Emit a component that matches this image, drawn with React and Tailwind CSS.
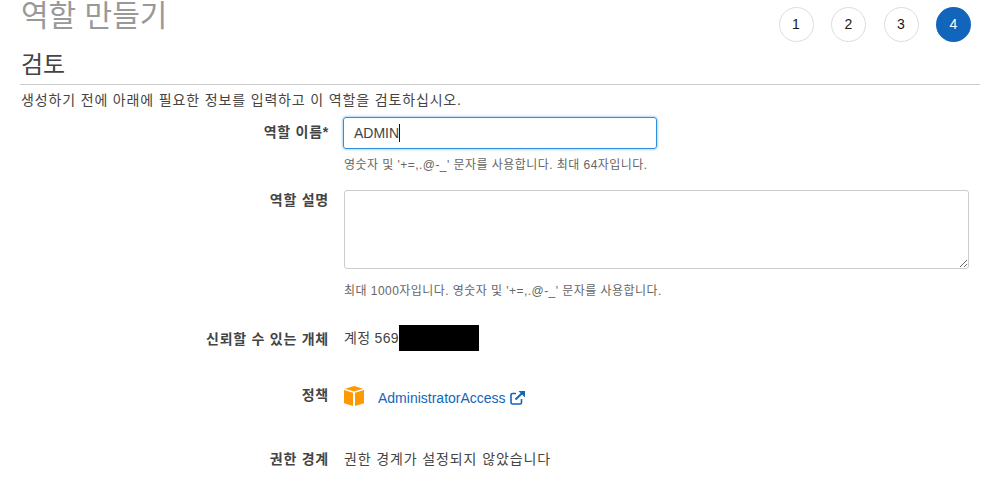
const fontStack = { fontFamily: '"Liberation Sans", "Noto Sans CJK KR", sans-serif' };

function Step({ n, active }) {
  return (
    <div
      className={
        active
          ? 'w-[35px] h-[35px] rounded-full bg-[#1166bb] text-white flex items-center justify-center text-[14px]'
          : 'w-[35px] h-[35px] rounded-full bg-white border border-[#dddddd] text-[#16191f] flex items-center justify-center text-[14px]'
      }
    >
      {n}
    </div>
  );
}

function Row({ label, className, labelClass, children }) {
  return (
    <div className={`flex ${className || ''}`}>
      <div className={`w-[329px] shrink-0 pl-[20px] text-right font-bold text-[14px] leading-[20px] tracking-[0.75px] text-[#444444] ${labelClass || ''}`}>
        {label}
      </div>
      <div className="flex-1 min-w-0 pl-[15px]">{children}</div>
    </div>
  );
}

function Cube() {
  return (
    <svg width="20" height="20" viewBox="0 0 20 20" className="shrink-0">
      <path d="M10 0 L19 2.8 L10 5.6 L1 2.8 Z" fill="#ff9900" />
      <path d="M0 4 L9 6.8 L9 20 L0 17.2 Z" fill="#ff9900" />
      <path d="M20 4 L11 6.8 L11 20 L20 17.2 Z" fill="#ff9900" />
    </svg>
  );
}

function ExternalIcon() {
  return (
    <svg width="15" height="14" viewBox="0 0 15 14" fill="none" stroke="#1166bb" strokeWidth="1.6">
      <path d="M11.5 8 V11.5 a1.5 1.5 0 0 1 -1.5 1.5 H2.5 a1.5 1.5 0 0 1 -1.5 -1.5 V4 a1.5 1.5 0 0 1 1.5 -1.5 H6" />
      <path d="M5.5 8.5 L12.5 1.8" strokeWidth="2" />
      <path d="M8.5 0 H15 V6.5 Z" fill="#1166bb" stroke="none" />
    </svg>
  );
}

export default function App() {
  return (
    <div style={fontStack} className="w-[983px] h-[478px] overflow-hidden bg-white text-[#444444]">
      <div className="flex justify-between pl-[21px] pr-[12px] pt-[7px] h-[50px]">
        <h1 className="text-[30px] leading-[32px] -mt-[7px] text-[#999999]">역할 만들기</h1>
        <div className="flex gap-[17.5px]">
          <Step n="1" />
          <Step n="2" />
          <Step n="3" />
          <Step n="4" active />
        </div>
      </div>

      <div className="ml-[20px] mr-[3px]">
        <h2 className="text-[24px] leading-[28px] pl-[1px] pt-[1px] pb-[5px] border-b border-[#cccccc] text-[#444444]">검토</h2>
      </div>
      <p className="pl-[21px] mt-[5px] text-[14px] leading-[20px] tracking-[0.85px] text-[#444444]">
        생성하기 전에 아래에 필요한 정보를 입력하고 이 역할을 검토하십시오.
      </p>

      <Row label="역할 이름*" className="mt-[7px]" labelClass="pt-[5px]">
        <div className="-ml-[1px] w-[314px] h-[32px] rounded-[3px] border border-[#2e8fe0] shadow-[0_0_3px_#66aeea] flex items-center pl-[10px] text-[14px] text-[#444444]">
          ADMIN
          <span className="w-px h-[18px] bg-[#111111]" />
        </div>
        <p className="mt-[8px] text-[12px] leading-[16px] tracking-[0.45px] text-[#666666]">
          영숫자 및 '+=,.@-_' 문자를 사용합니다. 최대 64자입니다.
        </p>
      </Row>

      <Row label="역할 설명" className="mt-[17px]">
        <textarea
          readOnly
          className="block w-[625px] h-[79px] rounded-[3px] border border-[#cccccc] bg-white outline-none"
        />
        <p className="mt-[14px] text-[12px] leading-[16px] tracking-[0.45px] text-[#666666]">
          최대 1000자입니다. 영숫자 및 '+=,.@-_' 문자를 사용합니다.
        </p>
      </Row>

      <Row label="신뢰할 수 있는 개체" className="mt-[26px] items-center" labelClass="pt-[1px]">
        <div className="flex items-center text-[14px] tracking-[0.3px]">
          계정 569
          <span className="w-[80px] h-[26px] bg-black" />
        </div>
      </Row>

      <Row label="정책" className="mt-[35px] h-[22px]" labelClass="-mt-[1px]">
        <div className="flex items-start gap-[14px] text-[14px] text-[#1166bb]">
          <Cube />
          <span className="flex items-center gap-[4px] h-[20px] mt-[2px]">
            AdministratorAccess
            <ExternalIcon />
          </span>
        </div>
      </Row>

      <Row label="권한 경계" className="mt-[41px]">
        <div className="text-[14px] leading-[20px] tracking-[0.88px]">권한 경계가 설정되지 않았습니다</div>
      </Row>
    </div>
  );
}
